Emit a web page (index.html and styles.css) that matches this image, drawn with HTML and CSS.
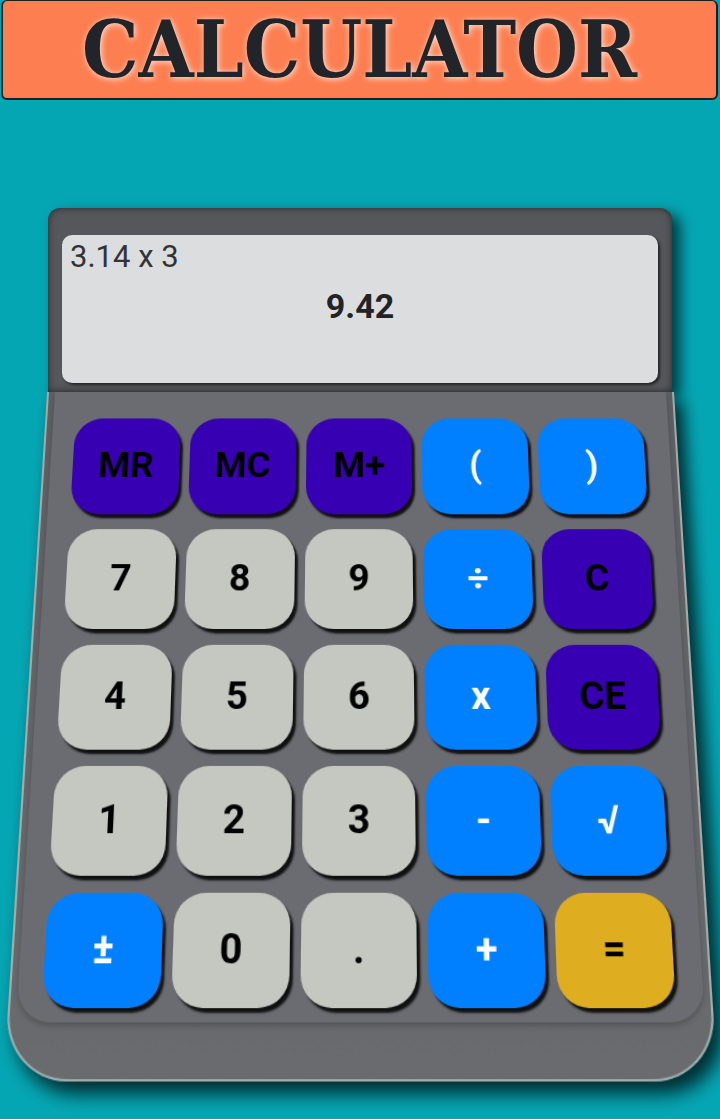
FILE: index.html
```html
<!DOCTYPE html>
<html lang="en">
<head>
<meta charset="utf-8">
<title>Calculator</title>
<link rel="stylesheet" href="styles.css">
</head>
<body>
<header class="title"><h1>CALCULATOR</h1></header>
<main class="calc">
  <div class="housing">
    <div class="display">
      <div class="expr">3.14 x 3</div>
      <div class="result">9.42</div>
    </div>
  </div>
  <div class="case">
    <div class="keypad">
      <div class="key mem">MR</div>
      <div class="key mem">MC</div>
      <div class="key mem">M+</div>
      <div class="key op">(</div>
      <div class="key op">)</div>

      <div class="key num">7</div>
      <div class="key num">8</div>
      <div class="key num">9</div>
      <div class="key op">÷</div>
      <div class="key mem">C</div>

      <div class="key num">4</div>
      <div class="key num">5</div>
      <div class="key num">6</div>
      <div class="key op">x</div>
      <div class="key mem">CE</div>

      <div class="key num">1</div>
      <div class="key num">2</div>
      <div class="key num">3</div>
      <div class="key op">-</div>
      <div class="key op">√</div>

      <div class="key op">±</div>
      <div class="key num">0</div>
      <div class="key num">.</div>
      <div class="key op">+</div>
      <div class="key eq">=</div>
    </div>
  </div>
</main>
</body>
</html>
```
FILE: styles.css
```css
html, body {
  margin: 0;
  padding: 0;
}

body {
  background: #05a6b4;
  font-family: Roboto, "Liberation Sans", sans-serif;
  height: 1119px;
  overflow: hidden;
}

.title {
  margin: 0 2px 0 1px;
  height: 100px;
  box-sizing: border-box;
  border: 2px solid #1e1e1e;
  border-top-width: 1px;
  border-radius: 6px;
  background: #fd7e50;
  display: flex;
  align-items: center;
  justify-content: center;
}

.title h1 {
  margin: 0;
  font-family: "DejaVu Serif Condensed", "DejaVu Serif", serif;
  font-stretch: condensed;
  font-weight: bold;
  font-size: 79px;
  line-height: 1;
  color: #212529;
  text-shadow: 1px 1px 6px rgba(255, 255, 255, 0.85);
}

.calc {
  width: 627px;
  margin: 108px auto 0;
}

.housing {
  width: 624px;
  height: 184px;
  margin: 0 auto;
  box-sizing: border-box;
  padding: 27px 14px 9px;
  background: #56575b;
  border-radius: 12px 12px 0 0;
  box-shadow: inset 0 0 7px rgba(0, 0, 0, 0.55), 8px 6px 14px rgba(0, 0, 0, 0.65);
}

.display {
  height: 148px;
  box-sizing: border-box;
  padding: 4px 8px;
  background: #dcdddf;
  border-radius: 10px;
  box-shadow: 2px 2px 3px rgba(0, 0, 0, 0.6);
}

.expr {
  font-size: 31px;
  line-height: 36px;
  color: #333336;
}

.result {
  margin-top: 11px;
  font-size: 34px;
  line-height: 40px;
  font-weight: bold;
  color: #222326;
  text-align: center;
}

.case {
  height: 644px;
  box-sizing: border-box;
  border: 2px solid #a2abaa;
  border-top: none;
  border-radius: 0 0 56px 56px;
  background: linear-gradient(#5e5f63, #6a6b6f);
  transform-origin: 50% 0;
  transform: perspective(1800px) rotateX(20deg);
  box-shadow: 8px 10px 16px rgba(0, 0, 0, 0.75);
}

.keypad {
  margin: 0 6px;
  padding: 27.5px 25px 12px 22px;
  background: #6b6c71;
  border-radius: 0 0 30px 30px;
  box-shadow: 0 3px 5px rgba(0, 0, 0, 0.2);
  display: grid;
  grid-template-columns: repeat(5, 1fr);
  grid-auto-rows: 99px;
  gap: 15px 10px;
}

.key {
  border-radius: 28px;
  display: flex;
  align-items: center;
  justify-content: center;
  font-size: 36px;
  font-weight: bold;
  box-shadow: 3px 4px 2px rgba(0, 0, 0, 0.85);
}

.mem {
  background: #3700b3;
  color: #000;
}

.op {
  background: #0080ff;
  color: #fff;
}

.num {
  background: #c4c8c0;
  color: #000;
}

.eq {
  background: #dfae20;
  color: #000;
}
```
